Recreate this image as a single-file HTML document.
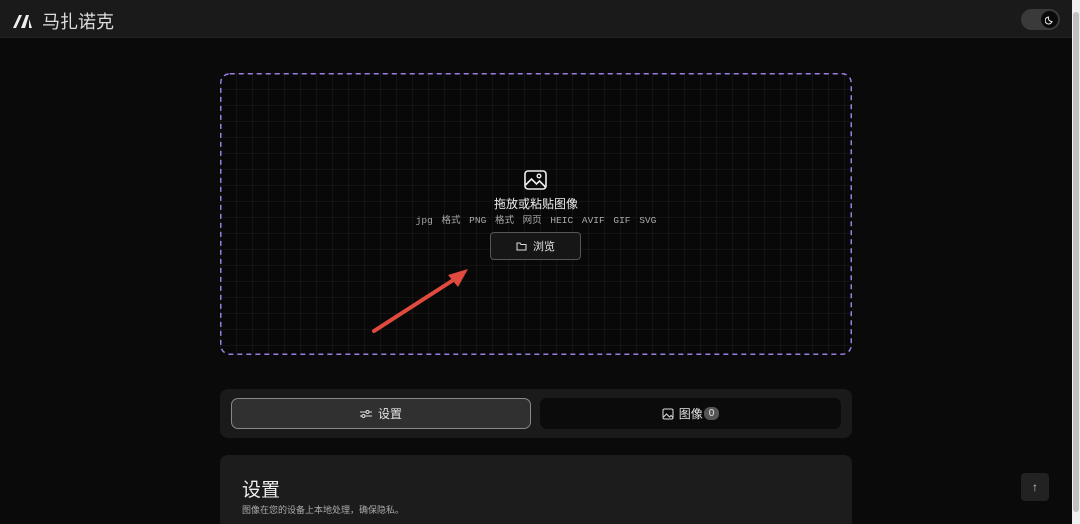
<!DOCTYPE html>
<html><head><meta charset="utf-8"><style>
*{box-sizing:border-box;margin:0;padding:0}
html,body{width:1080px;height:524px;overflow:hidden}
body{background:#0a0a0a;font-family:"Liberation Sans","Noto Sans CJK SC",sans-serif;color:#e5e5e5;position:relative}
.hdr{position:absolute;left:0;top:0;width:1072px;height:38px;background:#1a1a1a;border-bottom:1px solid #222}
.logo{position:absolute;left:12px;top:8px;font-size:18px;color:#ddd;display:flex;align-items:center;gap:8px}
.tog{position:absolute;left:1021px;top:9px;width:39px;height:21px;border-radius:11px;background:#3a3a3a}
.tog .k{position:absolute;right:2px;top:2px;width:17px;height:17px;border-radius:50%;background:#0a0a0a;display:flex;align-items:center;justify-content:center}
.sb{position:absolute;left:1072px;top:0;width:8px;height:524px;background:#f0f0f0}
.sb i{position:absolute;left:1px;top:12px;width:6px;height:500px;background:#c1c1c1;border-radius:3px}
.drop{position:absolute;left:220px;top:73px;width:632px;height:282px;border-radius:9px;
background-color:#080808;background-image:linear-gradient(rgba(255,255,255,.045) 1px,transparent 1px),linear-gradient(90deg,rgba(255,255,255,.045) 1px,transparent 1px);background-size:16px 16px}
.c{position:absolute;left:0;width:100%;text-align:center}
.btn{position:absolute;left:270px;top:159px;width:91px;height:28px;border:1px solid #555;border-radius:4px;background:#161616;font-size:11px;display:flex;align-items:center;justify-content:center;gap:6px}
.tabs{position:absolute;left:220px;top:389px;width:632px;height:49px;background:#1a1a1a;border-radius:8px}
.t1{position:absolute;left:11px;top:9px;width:300px;height:31px;border:1px solid #888;border-radius:7px;background:#303030;display:flex;align-items:center;justify-content:center;gap:6px;font-size:12px}
.t2{position:absolute;left:320px;top:9px;width:301px;height:31px;border-radius:7px;background:#0b0b0b;display:flex;align-items:center;justify-content:center;gap:5px;font-size:12px}
.badge{background:#555;border-radius:6px;font-size:10px;padding:1px 5px;margin-left:-4px}
.card{position:absolute;left:220px;top:455px;width:632px;height:69px;background:#1c1c1c;border-radius:8px 8px 0 0}
.top{position:absolute;left:1021px;top:473px;width:28px;height:28px;background:#222;border-radius:4px;display:flex;align-items:center;justify-content:center;color:#ccc;font-size:12px}
</style></head><body>
<div class="hdr"><div class="logo"><svg width="22" height="16" viewBox="0 0 22 16"><path d="M1 15L7 2h3L4 15z M9 15L14 2h3l-4 13z M17 6l3 9h-3z" fill="#eee"/></svg><span>马扎诺克</span></div>
<div class="tog"><div class="k"><svg width="10" height="10" viewBox="0 0 10 10"><path d="M7 6.5A3.5 3.5 0 0 1 3.5 2 3.5 3.5 0 1 0 7 6.5z" fill="none" stroke="#eee" stroke-width="1"/></svg></div></div></div>
<div class="sb"><i></i></div>
<div class="drop">
<svg style="position:absolute;left:0;top:0" width="632" height="282"><rect x="0.75" y="0.75" width="630.5" height="280.5" rx="9" fill="none" stroke="#9a7ee0" stroke-width="1.5" stroke-dasharray="5 4"/></svg>
<svg style="position:absolute;left:304px;top:97px" width="23" height="20" viewBox="0 0 23 20"><rect x="1" y="1" width="21" height="18" rx="3" fill="none" stroke="#eee" stroke-width="1.6"/><circle cx="15" cy="6" r="1.8" fill="none" stroke="#eee" stroke-width="1.4"/><path d="M1.5 15l6-6 5 5 3-3 6 6" fill="none" stroke="#eee" stroke-width="1.6"/></svg>
<div class="c" style="top:122px;font-size:12px;color:#eee">拖放或粘贴图像</div>
<div class="c" style="top:139px;font-size:9.5px;color:#aaa;font-family:'Liberation Mono','Noto Sans CJK SC',monospace;word-spacing:3px">jpg 格式 PNG 格式 网页 HEIC AVIF GIF SVG</div>
<div class="btn"><svg width="11" height="9" viewBox="0 0 11 9"><path d="M1 1h3l1 1.5h5V8H1z" fill="none" stroke="#ddd"/></svg>浏览</div>
<svg style="position:absolute;left:150px;top:192px" width="105" height="70" viewBox="0 0 105 70"><path d="M4 66L88 12" stroke="#e04a3f" stroke-width="4" stroke-linecap="round"/><path d="M98 4L78 10L88 22z" fill="#e04a3f"/></svg>
</div>
<div class="tabs"><div class="t1"><svg width="12" height="10" viewBox="0 0 12 10"><path d="M0 3h6M9 3h3M0 7h2M5 7h7" stroke="#ddd"/><circle cx="7.5" cy="3" r="1.5" fill="none" stroke="#ddd"/><circle cx="3.5" cy="7" r="1.5" fill="none" stroke="#ddd"/></svg>设置</div>
<div class="t2"><svg width="12" height="12" viewBox="0 0 12 12"><rect x="1" y="1" width="10" height="10" rx="1.5" fill="none" stroke="#ddd"/><path d="M1.5 9l3-3 3 3 1.5-1.5 2 2" fill="none" stroke="#ddd"/></svg>图像<span class="badge">0</span></div></div>
<div class="card"><div style="position:absolute;left:22px;top:20px;font-size:19px;color:#eee">设置</div>
<div style="position:absolute;left:22px;top:48px;font-size:9px;color:#aaa">图像在您的设备上本地处理，确保隐私。</div></div>
<div class="top">↑</div>
</body></html>
